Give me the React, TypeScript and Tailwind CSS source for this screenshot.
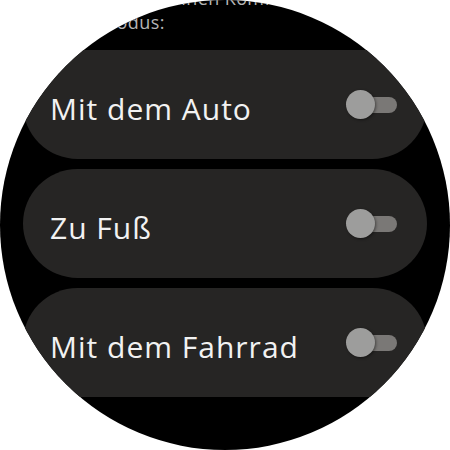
import React from 'react';

const modes = ['Mit dem Auto', 'Zu Fuß', 'Mit dem Fahrrad'];

const Toggle = () => (
  <div className="relative h-[30px] w-[51px] shrink-0">
    <div className="absolute left-[5px] right-0 top-[7px] h-[16px] rounded-full bg-[#7a7876]" />
    <div className="absolute left-0 top-0 h-[29px] w-[29px] rounded-full bg-[#9d9d9c] shadow-[1px_1px_3px_rgba(0,0,0,0.45)]" />
  </div>
);

export default function App() {
  return (
    <div className="h-[450px] w-[450px] bg-white" style={{ fontFamily: '"Open Sans", Roboto, sans-serif' }}>
      <div className="flex h-[450px] w-[450px] flex-col overflow-hidden rounded-full bg-black px-[23px]">
        <div className="mt-[-14px] pl-[77px] text-[18px] leading-[24px] tracking-[0.4px] text-[#b5b5b5]">
          <div>Wähle deinen Komfort-</div>
          <div>Modus:</div>
        </div>
        <div className="mt-[16px] flex flex-col gap-[10px]">
          {modes.map((mode) => (
            <div
              key={mode}
              className="flex h-[109px] items-center justify-between rounded-full bg-[#262524] pl-[27px] pr-[30px]"
            >
              <span className="pt-[7px] text-[30px] font-medium tracking-[1px] text-[#f2f2f2]">{mode}</span>
              <Toggle />
            </div>
          ))}
        </div>
      </div>
    </div>
  );
}
